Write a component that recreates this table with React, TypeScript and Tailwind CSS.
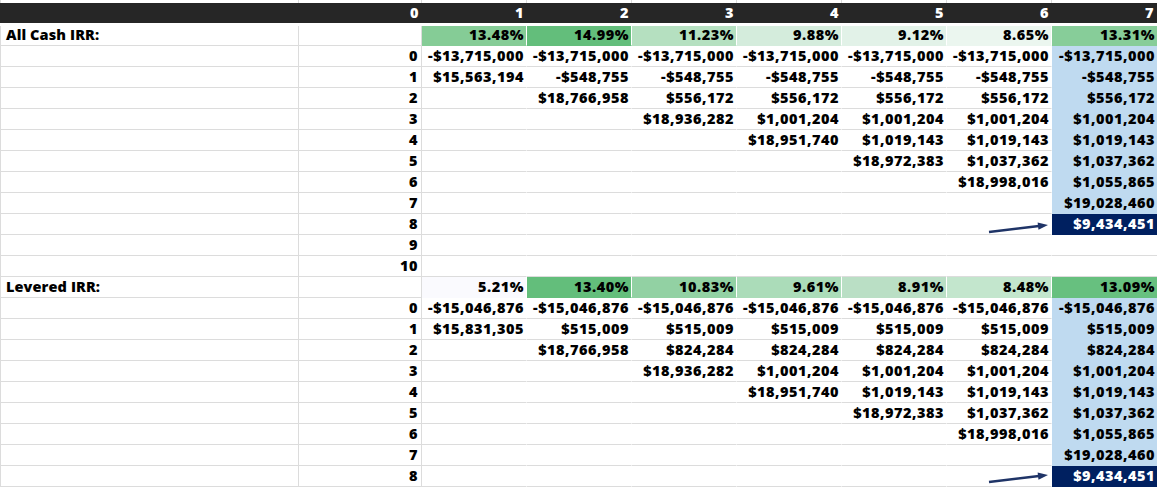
import React from "react";

type Cell = { text?: string; bg?: string; white?: boolean };

const GRID = "border-[#dcdcdc]";

function Arrow({ up }: { up: number }) {
  const y1 = 18 - up;
  const y2 = 11 - up;
  return (
    <svg
      className="absolute left-0 top-0 pointer-events-none"
      width="105"
      height="21"
      viewBox="0 0 105 21"
    >
      <line x1="42" y1={y1} x2="92" y2={y2 + 1} stroke="#1f3467" strokeWidth="2.4" />
      <polygon
        points={`101,${y2} 91.5,${y2 + 4.8} 90.6,${y2 - 2.6}`}
        fill="#1f3467"
      />
    </svg>
  );
}

function DataCell({ cell, last, arrow }: { cell: Cell; last?: boolean; arrow?: number }) {
  const filled = !!cell.bg;
  return (
    <div
      className={[
        "relative flex items-center justify-end pr-[2px] h-full border-b",
        last ? "w-[105px]" : "w-[105px] border-r border-r-white",
        filled ? "border-b-transparent " + cell.bg : "border-b-[#dcdcdc] bg-white",
        cell.white ? "text-white" : "text-black",
      ].join(" ")}
    >
      {arrow !== undefined && <Arrow up={arrow} />}
      {cell.text && <span className="relative">{cell.text}</span>}
    </div>
  );
}

function Row({
  label,
  idx,
  cells,
  h = "h-[21px]",
  arrow,
}: {
  label?: string;
  idx?: string;
  cells: Cell[];
  h?: string;
  arrow?: number;
}) {
  return (
    <div className={"flex " + h}>
      <div className={"w-[299px] h-full border-l border-r border-b flex items-center pl-[5px] tracking-[0.1px] " + GRID}>
        {label}
      </div>
      <div className={"w-[123px] h-full border-r border-b flex items-center justify-end pr-[3px] " + GRID}>
        {idx}
      </div>
      {cells.map((c, i) => (
        <DataCell key={i} cell={c} last={i === 6} arrow={i === 5 ? arrow : undefined} />
      ))}
    </div>
  );
}

function buildSection(
  init: string,
  mids: string[],
  finals: string[],
  last: string,
  rows: number
): Cell[][] {
  const out: Cell[][] = [];
  for (let r = 0; r < rows; r++) {
    const row: Cell[] = [];
    for (let c = 1; c <= 7; c++) {
      let text: string | undefined;
      if (r === 0) text = init;
      else if (r < c) text = mids[r - 1];
      else if (r === c) text = finals[c - 1];
      else if (c === 7 && r === 8) text = last;
      let bg: string | undefined;
      let white = false;
      if (c === 7 && r <= 7) bg = "bg-[#bfdaf0]";
      if (c === 7 && r === 8) {
        bg = "bg-[#002060]";
        white = true;
      }
      row.push({ text, bg, white });
    }
    out.push(row);
  }
  return out;
}

const cashIrr: Cell[] = [
  { text: "13.48%", bg: "bg-[#85cc96]" },
  { text: "14.99%", bg: "bg-[#63be7b]" },
  { text: "11.23%", bg: "bg-[#b5e0c0]" },
  { text: "9.88%", bg: "bg-[#d4ecdc]" },
  { text: "9.12%", bg: "bg-[#e2f2e8]" },
  { text: "8.65%", bg: "bg-[#ebf6ef]" },
  { text: "13.31%", bg: "bg-[#87cd99]" },
];

const levIrr: Cell[] = [
  { text: "5.21%", bg: "bg-[#fafafe]" },
  { text: "13.40%", bg: "bg-[#63be7b]" },
  { text: "10.83%", bg: "bg-[#92d1a3]" },
  { text: "9.61%", bg: "bg-[#abdcb9]" },
  { text: "8.91%", bg: "bg-[#badfc5]" },
  { text: "8.48%", bg: "bg-[#c3e6cd]" },
  { text: "13.09%", bg: "bg-[#67c07f]" },
];

const finals = [
  "$15,563,194",
  "$18,766,958",
  "$18,936,282",
  "$18,951,740",
  "$18,972,383",
  "$18,998,016",
  "$19,028,460",
];
const levFinals = [
  "$15,831,305",
  "$18,766,958",
  "$18,936,282",
  "$18,951,740",
  "$18,972,383",
  "$18,998,016",
  "$19,028,460",
];

const cashRows = buildSection(
  "-$13,715,000",
  ["-$548,755", "$556,172", "$1,001,204", "$1,019,143", "$1,037,362", "$1,055,865"],
  finals,
  "$9,434,451",
  11
);
const levRows = buildSection(
  "-$15,046,876",
  ["$515,009", "$824,284", "$1,001,204", "$1,019,143", "$1,037,362", "$1,055,865"],
  levFinals,
  "$9,434,451",
  9
);

export default function App() {
  return (
    <div className="w-[1157px] h-[487px] overflow-hidden bg-white font-['Open_Sans',sans-serif] font-extrabold text-[14.5px] tracking-[0.5px] leading-none text-black">
      {/* top strip */}
      <div className="flex h-[3px]">
        <div className={"w-[299px] h-full border-l border-r " + GRID} />
        <div className={"w-[123px] h-full border-r " + GRID} />
        {[0, 1, 2, 3, 4, 5].map((i) => (
          <div key={i} className={"w-[105px] h-full border-r " + GRID} />
        ))}
        <div className="w-[105px] h-full" />
      </div>
      {/* header */}
      <div className="flex h-[20px] bg-[#262626] text-white">
        <div className="w-[299px]" />
        <div className="w-[123px] flex items-center justify-end pr-[3px]">0</div>
        {[1, 2, 3, 4, 5, 6, 7].map((n) => (
          <div key={n} className="w-[105px] flex items-center justify-end pr-[3px]">
            {n}
          </div>
        ))}
      </div>
      <div className="h-[3px]" />
      <Row label="All Cash IRR:" cells={cashIrr} h="h-[20px]" />
      {cashRows.map((cells, r) => (
        <Row key={r} idx={String(r)} cells={cells} arrow={r === 8 ? 0 : undefined} />
      ))}
      <Row label="Levered IRR:" cells={levIrr} />
      {levRows.map((cells, r) => (
        <Row key={r} idx={String(r)} cells={cells} arrow={r === 8 ? 2 : undefined} />
      ))}
    </div>
  );
}
